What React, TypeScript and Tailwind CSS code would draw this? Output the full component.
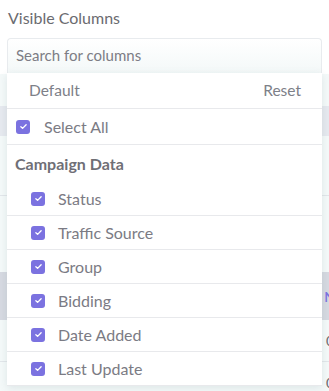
import React from "react";

const columns = ["Status", "Traffic Source", "Group", "Bidding", "Date Added", "Last Update"];

const Check = () => (
    <span className="flex h-[14px] w-[14px] shrink-0 items-center justify-center rounded-[3px] bg-[#7b72e0]">
        <svg viewBox="0 0 12 12" className="h-[9px] w-[9px]" fill="none" stroke="white" strokeWidth={1.8} strokeLinecap="round" strokeLinejoin="round">
            <path d="M2.5 6.3l2.3 2.2 4.7-4.8" />
        </svg>
    </span>
);

export default function App() {
    return (
        <div
            className="relative h-[391px] w-[329px] overflow-hidden bg-white"
            style={{ fontFamily: "Lato, 'Open Sans', sans-serif" }}
        >
            <div className="px-2 pt-[8px] text-[16px] leading-5 text-[#6b6b70]">Visible Columns</div>
            <div className="mx-[7px] mt-[10px] flex h-[36px] items-start rounded-t-[4px] border border-b-0 border-[#e8ebee] bg-gradient-to-b from-white to-[#f3f8f8] px-2 pt-[5px] text-[15px] text-[#7d7d85]">
                Search for columns
            </div>

            {/* table behind the menu */}
            <div className="flex flex-col bg-[#f4f9f9]">
                <div className="h-[32px]" />
                <div className="h-[30px] bg-[#e6e9ef]" />
                <div className="h-[60px] border-b border-[#e2e6ea]" />
                <div className="h-[76px]" />
                <div className="flex h-[48px] items-center justify-end bg-[#d6d9e1] text-[14px] font-semibold text-[#7b72e0]">
                    <span className="translate-x-[6px]">N</span>
                </div>
                <div className="flex h-[42px] items-center justify-end border-b border-[#e2e6ea] text-[14px] text-[#6b6b70]">
                    <span className="translate-x-[5px]">0</span>
                </div>
                <div className="flex h-[40px] items-center justify-end text-[14px] text-[#6b6b70]">
                    <span className="translate-x-[5px]">0</span>
                </div>
            </div>

            {/* dropdown */}
            <div className="absolute left-[7px] top-[73px] w-[315px] bg-white text-[16px] text-[#7b7b84] shadow-[0_2px_8px_rgba(60,90,100,0.12)]">
                <div className="flex h-[36px] items-center justify-between border-b border-[#e8e9ec] pl-[22px] pr-[21px] pt-[1px] text-[15.5px] text-[#7d8088]">
                    <span>Default</span>
                    <span>Reset</span>
                </div>
                <div className="flex h-[36px] items-center gap-[14px] border-b border-[#e8e9ec] pl-[9px]">
                    <Check />
                    <span>Select All</span>
                </div>
                <div className="flex h-[37px] items-center pl-[8px] font-bold text-[#6f6f76]">Campaign Data</div>
                {columns.map((c) => (
                    <div key={c} className="flex h-[34px] items-center gap-[13px] border-b border-[#e8e9ec] pl-[24px]">
                        <Check />
                        <span>{c}</span>
                    </div>
                ))}
            </div>
        </div>
    );
}
